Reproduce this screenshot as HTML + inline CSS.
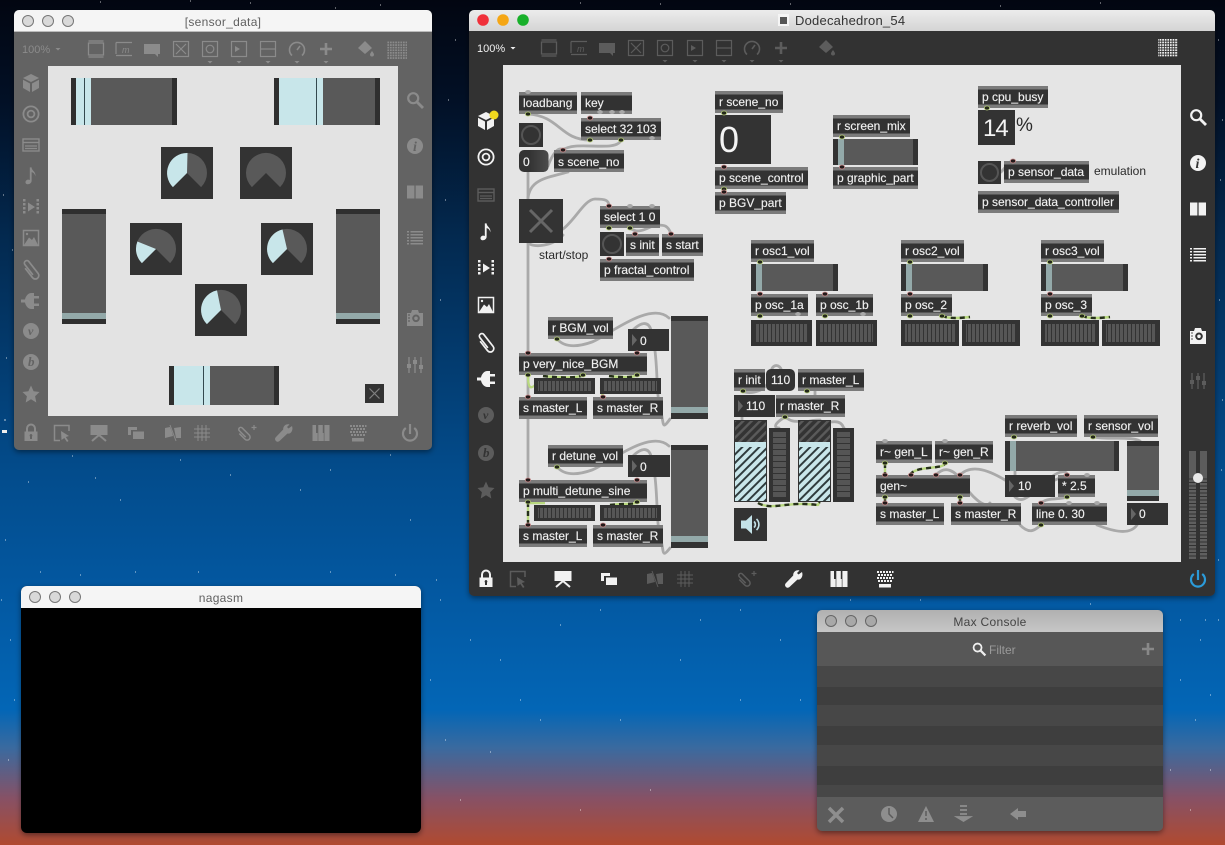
<!DOCTYPE html>
<html><head><meta charset="utf-8"><title>Dodecahedron_54</title>
<style>
html,body{margin:0;padding:0;background:#02101f;overflow:hidden}
svg{display:block}
text{font-family:"Liberation Sans",sans-serif}
.t{font-size:12px;fill:#f0f0f0;stroke:#f0f0f0;stroke-width:.15}
.d{font-size:12px;fill:#2a2a2a}
.w{font-size:12px;fill:#606060;text-anchor:middle;letter-spacing:.3px}
.c{fill:none;stroke:#a9a9a9;stroke-width:2.8;stroke-linecap:round}
.g{fill:none;stroke:#b9d97f;stroke-width:2.4}
.k{fill:none;stroke:#26301a;stroke-width:2.4;stroke-dasharray:5 4}
.s{fill:none;stroke:currentColor}
.gi{color:#8b8b8b}
.wi{color:#f2f2f2}
.di{color:#5c5c5c}
</style></head><body>
<svg xmlns="http://www.w3.org/2000/svg" width="1225" height="845" viewBox="0 0 1225 845">
<defs>
<linearGradient id="bg" x1="0" y1="0" x2="0" y2="1">
<stop offset="0" stop-color="#020611"/><stop offset=".12" stop-color="#021026"/><stop offset=".28" stop-color="#03294f"/><stop offset=".56" stop-color="#034c8c"/><stop offset=".7" stop-color="#0358a1"/><stop offset=".84" stop-color="#0366b6"/><stop offset=".885" stop-color="#3a6a9f"/><stop offset=".945" stop-color="#875165"/><stop offset="1" stop-color="#b04a30"/>
</linearGradient>
<linearGradient id="obj" x1="0" y1="0" x2="0" y2="1"><stop offset="0" stop-color="#7b7b7b"/><stop offset=".17" stop-color="#7b7b7b"/><stop offset=".17" stop-color="#323232"/><stop offset=".85" stop-color="#323232"/><stop offset=".85" stop-color="#7b7b7b"/><stop offset="1" stop-color="#7b7b7b"/></linearGradient>
<linearGradient id="msg" x1="0" y1="0" x2="1" y2="0"><stop offset=".35" stop-color="#333"/><stop offset="1" stop-color="#4c4c4c"/></linearGradient>
<linearGradient id="ttl" x1="0" y1="0" x2="0" y2="1"><stop offset="0" stop-color="#ececec"/><stop offset="1" stop-color="#d4d4d4"/></linearGradient>
<linearGradient id="ttc" x1="0" y1="0" x2="0" y2="1"><stop offset="0" stop-color="#b0b0b0"/><stop offset="1" stop-color="#c6c6c6"/></linearGradient>
<pattern id="mh" width="4" height="10" patternUnits="userSpaceOnUse"><rect width="3" height="10" fill="#565656"/></pattern>
<pattern id="mv" width="10" height="6" patternUnits="userSpaceOnUse"><rect width="10" height="5" fill="#555"/></pattern>
<pattern id="mr" width="10" height="3.5" patternUnits="userSpaceOnUse"><rect width="10" height="2.5" fill="#5f5f5f"/></pattern>
<pattern id="h1" width="6" height="6" patternUnits="userSpaceOnUse" patternTransform="rotate(45)"><rect width="6" height="6" fill="#c9e6ea"/><rect width="2" height="6" fill="#2f3b3d"/></pattern>
<pattern id="h2" width="6" height="6" patternUnits="userSpaceOnUse" patternTransform="rotate(45)"><rect width="6" height="6" fill="#333"/><rect width="2.400" height="6" fill="#5a5a5a"/></pattern>
<pattern id="dg" width="2.600" height="2.600" patternUnits="userSpaceOnUse"><rect width="1.700" height="1.700" fill="#8b8b8b"/></pattern>
<pattern id="dw" width="2.600" height="2.600" patternUnits="userSpaceOnUse"><rect width="1.700" height="1.700" fill="#f2f2f2"/></pattern>
<filter id="sh" x="-10%" y="-10%" width="120%" height="120%"><feDropShadow dx="0" dy="2" stdDeviation="3" flood-color="#000" flood-opacity=".45"/></filter>

<symbol id="cube" overflow="visible"><path fill="currentColor" d="M0-9 8-5 0-1-8-5ZM-8-3.200-1 .5V9L-8 5ZM8-3.200 1 .5V9L8 5Z"/></symbol>
<symbol id="target" overflow="visible"><g class="s" stroke-width="1.800"><circle r="7.600"/><circle r="3.400"/></g></symbol>
<symbol id="rack" overflow="visible"><g class="s" stroke-width="1.400"><rect x="-8" y="-6" width="16" height="12"/><path d="M-8-2.500H8"/><path d="M-6 1H6M-6 3.500H6" stroke-width="1.200"/></g></symbol>
<symbol id="note" overflow="visible"><path fill="currentColor" transform="scale(.78)" d="M-1.500-11H.8C1-6.500 6.800-5.500 5.500.5 5-3 3-4.500.8-5V6C.8 9.500-2.500 11-5 10.500-8 9.800-7.500 6-5 5-3.800 4.500-2.500 4.600-1.500 5.200Z"/></symbol>
<symbol id="player" overflow="visible"><path fill="currentColor" d="M-3-4.500 4 0-3 4.500ZM-8-8h2.500v2.500H-8ZM-8-4h2.500v2.500H-8ZM-8 0h2.500v2.500H-8ZM-8 4h2.500v2.500H-8ZM5.500-8H8v2.500H5.500ZM5.500-4H8v2.500H5.500ZM5.500 0H8v2.500H5.500ZM5.500 4H8v2.500H5.500Z"/></symbol>
<symbol id="image" overflow="visible"><rect class="s" x="-7.500" y="-7.500" width="15" height="15" stroke-width="1.500"/><path fill="currentColor" d="M-7 7-2-.5 1 2 3-1 7 7Z"/><circle cx="-4" cy="-4" r="1.200" fill="currentColor"/></symbol>
<symbol id="clip" overflow="visible"><path class="s" stroke-width="1.700" transform="rotate(-38)" d="M-3.500-5V7A3.500 3.500 0 0 0 3.500 7V-8A2.500 2.500 0 0 0-1.500-8V5"/></symbol>
<symbol id="plug" overflow="visible"><path fill="currentColor" d="M8-5H3V-8H.5C-3.500-8-5.500-4-6-1.500H-10V1.500H-6C-5.500 4-3.500 8 .5 8H3V5H8V2.500H3V-2.500H8Z"/></symbol>
<symbol id="disc" overflow="visible"><circle r="8" fill="currentColor"/></symbol>
<symbol id="star" overflow="visible"><path fill="currentColor" d="M0-8.500 2.600-2.700 8.500-2 4.100 2.200 5.300 8.500 0 5.300-5.300 8.500-4.100 2.200-8.500-2-2.600-2.700Z"/></symbol>
<symbol id="search" overflow="visible"><circle class="s" cx="-1.800" cy="-1.800" r="5" stroke-width="2.200"/><path class="s" stroke-width="2.800" d="M2 2 8 8"/></symbol>
<symbol id="cols" overflow="visible"><path fill="currentColor" d="M-8-6.500H-.6V6.500H-8ZM.6-6.500H8V6.500H.6Z" /></symbol>
<symbol id="list" overflow="visible"><path fill="currentColor" d="M-8-7h2v1.500h-2ZM-4.500-7H8v1.500H-4.500ZM-8-4h2v1.500h-2ZM-4.500-4H8v1.500H-4.500ZM-8-1h2V.5h-2ZM-4.500-1H8V.5H-4.500ZM-8 2h2v1.500h-2ZM-4.500 2H8v1.500H-4.500ZM-8 5h2v1.500h-2ZM-4.500 5H8v1.500H-4.500Z"/></symbol>
<symbol id="camera" overflow="visible"><path fill="currentColor" fill-rule="evenodd" d="M-8-5H-4L-3-8H3L4-5H8V8H-8ZM1-3.500A3.800 3.800 0 1 0 1 4.100 3.800 3.800 0 0 0 1-3.500ZM1-1.500A1.800 1.800 0 1 1 1 2.100 1.800 1.800 0 0 1 1-1.500Z"/><path stroke="#555" d="M-7-3h2M-7 0h2M-7 3h2"/></symbol>
<symbol id="sliders" overflow="visible"><path class="s" stroke-width="1.300" d="M-6-8V8M0-8V8M6-8V8"/><path fill="currentColor" d="M-8-1h4V3h-4ZM-2-5h4v4h-4ZM4 0h4v4H4Z"/></symbol>
<symbol id="lock" overflow="visible"><path class="s" stroke-width="2" d="M-4-1.500V-4.500A4 4 0 0 1 4-4.500V-1.500"/><path fill="currentColor" fill-rule="evenodd" d="M-6.500-1.500H6.500V8H-6.500ZM0 1A1.500 1.500 0 0 0-1 3.500V6H1V3.500A1.500 1.500 0 0 0 0 1Z"/></symbol>
<symbol id="select" overflow="visible"><path class="s" stroke-width="1.500" d="M7-2V-7.500H-7.500V7.500H-2"/><path fill="currentColor" d="M-1-2 7 3 3.800 4 6.500 8 5 9 2.300 5-.5 7Z"/></symbol>
<symbol id="pres" overflow="visible"><path fill="currentColor" d="M-8.500-8H8.500V2H-8.500Z"/><path class="s" stroke-width="2" d="M0 2-7 8M0 2 7 8"/></symbol>
<symbol id="windows" overflow="visible"><path fill="currentColor" d="M-8-6H1V-3H-5V2H-8ZM-3-1.500H8V6H-3Z"/></symbol>
<symbol id="hidden" overflow="visible"><path fill="currentColor" d="M-8-5-3-6-1-1 0 3-8 5ZM1-5 8-6V5L3 5Z"/><path class="s" stroke-width="1" d="M-3-8 3 8"/></symbol>
<symbol id="grid" overflow="visible"><path class="s" d="M-4-8V8M0-8V8M4-8V8M-8-4H8M-8 0H8M-8 4H8"/></symbol>
<symbol id="clipplus" overflow="visible"><path class="s" stroke-width="1.500" transform="rotate(-45 -2 2)" d="M-5-3V5A3 3 0 0 0 1 5V-5A2 2 0 0 0-3-5V4"/><path class="s" stroke-width="1.200" d="M7-8V-3M4.500-5.500H9.500"/></symbol>
<symbol id="wrench" overflow="visible"><path fill="currentColor" d="M8-7 4.500-4.500 3-6 5.500-8.500C2-9.500-1-7-.8-3.500L-8 4C-9 5-9.500 6.500-8 8-6.500 9.500-5 8.500-4 7.500L3.500 0.500C7 1.500 9.500-3 8-7Z"/></symbol>
<symbol id="piano" overflow="visible"><path fill="currentColor" d="M-8.500-8H-5V0H-3.300V8H-8.500ZM-2.700-8H1.800V0H2.800V8H-2.700ZM3.400-8H8.500V8H3.400Z"/></symbol>
<symbol id="keys" overflow="visible"><path fill="currentColor" d="M-8-8h2v2h-2ZM-5-8h2v2h-2ZM-2-8h2v2h-2ZM1-8h2v2H1ZM4-8h2v2H4ZM7-8h1.500v2H7ZM-7-5h2v2h-2ZM-4-5h2v2h-2ZM-1-5h2v2h-2ZM2-5h2v2H2ZM5-5h2v2H5ZM-8-2h2v2h-2ZM-5-2h2v2h-2ZM-2-2h2v2h-2ZM1-2h2v2H1ZM4-2h2v2H4ZM7-2h1.500v2H7ZM-7 1h2v2h-2ZM-4 1h2v2h-2ZM-1 1h2v2h-2ZM2 1h2v2H2ZM5 1h2v2H5ZM-6 5H6V8.500H-6Z"/></symbol>
<symbol id="power" overflow="visible"><path class="s" stroke-width="2.200" d="M-4.200-5A7 7 0 1 0 4.200-5M0-9V1"/></symbol>
<symbol id="frame" overflow="visible"><path class="s" stroke-width="1.300" d="M-7.500-8H7.500M-7.500 8H7.500M-7.500-6.500V6.500M7.500-6.500V6.500M-7.500-6H7.500M-7.500 6H7.500"/></symbol>
<symbol id="msgi" overflow="visible"><path class="s" stroke-width="1.200" d="M-8-6.500H8M-8-6.500V5M-8 6.500H8"/></symbol>
<symbol id="comment" overflow="visible"><path fill="currentColor" d="M-8-5H8V5H6V8L3 5H-8Z"/></symbol>
<symbol id="xbox" overflow="visible"><rect class="s" x="-7.500" y="-7.500" width="15" height="15" stroke-width="1.200"/><path class="s" stroke-width="1.200" d="M-5-5 5 5M5-5-5 5"/></symbol>
<symbol id="btn" overflow="visible"><rect class="s" x="-7.500" y="-7.500" width="15" height="15" stroke-width="1.200"/><circle class="s" r="3.800" stroke-width="1.200"/></symbol>
<symbol id="playb" overflow="visible"><rect class="s" x="-7.500" y="-7.500" width="15" height="15" stroke-width="1.200"/><path fill="currentColor" d="M-4-3 1 0-4 3Z"/></symbol>
<symbol id="minus" overflow="visible"><rect class="s" x="-7.500" y="-7.500" width="15" height="15" stroke-width="1.200"/><path class="s" stroke-width="1.200" d="M-7.500 0H7.500"/></symbol>
<symbol id="dial" overflow="visible"><path class="s" stroke-width="1.600" d="M-5 5.500A7.500 7.500 0 1 1 5 5.500M0 0 3-4"/></symbol>
<symbol id="plus" overflow="visible"><path fill="currentColor" d="M-1.300-6H1.300V-1.300H6V1.300H1.300V6H-1.300V1.300H-6V-1.300H-1.300Z"/></symbol>
<symbol id="bucket" overflow="visible"><path fill="currentColor" d="M-1-8 6-1-1 5-8-1ZM6 2C6 2 4 4.500 4 5.500A2 2 0 0 0 8 5.500C8 4.500 6 2 6 2Z"/></symbol>
<symbol id="tri" overflow="visible"><path fill="currentColor" d="M-2.500 0H2.500L0 2.500Z"/></symbol>
<symbol id="in" overflow="visible"><ellipse rx="2.600" ry="2" fill="#241a1a" stroke="#c98c8c" stroke-width=".8"/></symbol>
<symbol id="out" overflow="visible"><ellipse rx="2.600" ry="2" fill="#23281a" stroke="#b6cc78" stroke-width=".8"/></symbol>
<symbol id="idle" overflow="visible"><ellipse rx="2.800" ry="2" fill="#a9a9a9"/></symbol>
</defs>

<rect width="1225" height="845" fill="url(#bg)"/>
<path stroke="#fff" stroke-width="1" opacity=".75" fill="none" d="M3 195h1M6 358h1M12 250h1M4 420h2M5 540h1M1 600h1M28 482h1M72 456h1M95 478h1M120 500h1M180 460h1M230 475h1M300 490h1M330 470h1M390 455h1M410 520h1M440 300h1M445 200h1M448 100h1M455 40h1M250 3h1M380 5h1M190 1h1M100 2h1M335 8h1M580 3h1M790 4h1M660 4h1M1000 6h1M1100 3h1M1218 40h1M1222 120h1M1220 180h1M1219 300h1M1222 400h1M1221 470h1M1218 560h1M1205 620h1M1180 680h1M1195 720h1M1210 770h1M470 640h1M500 660h1M520 700h1M540 720h1M490 752h1M620 720h1M680 660h1M740 700h1M600 610h1M560 625h1M700 620h1M740 610h1M780 640h1M800 700h1M460 800h1M650 790h1M580 810h1M440 600h1M430 680h1M445 740h1M1180 620h1M1200 640h1M1210 695h1M10 640h1M14 700h1M8 760h1M40 572h1M80 575h1M135 572h1M198 572h1M330 572h1M395 575h1M436 580h1M1218 620h1M1170 770h1M1190 810h1M920 600h1M850 600h1M1090 604h1"/>
<rect x="2" y="430" width="5" height="3" fill="#eee"/>

<!-- WINDOW: sensor_data -->
<g filter="url(#sh)"><rect x="14" y="10" width="418" height="440" rx="5" fill="#636363"/></g>
<path d="M14 32V15a5 5 0 0 1 5-5H427a5 5 0 0 1 5 5V32Z" fill="#f5f5f5"/>
<rect x="14" y="31" width="418" height="1" fill="#bbb"/>
<g fill="#d9d9d9" stroke="#777"><circle cx="28" cy="21" r="5.500"/><circle cx="48" cy="21" r="5.500"/><circle cx="68" cy="21" r="5.500"/></g>
<text x="223" y="26" class="w">[sensor_data]</text>
<rect x="48" y="66" width="350" height="350" fill="#e3e3e3"/>
<g class="gi">
<text x="22" y="53" style="font-size:11px;fill:#8b8b8b">100%</text><use href="#tri" x="58" y="48"/>
<use href="#frame" x="96" y="49"/><use href="#msgi" x="124" y="49"/><text x="122" y="53" style="font-size:9px;font-style:italic;fill:#8b8b8b">m</text><use href="#comment" x="152" y="49"/><use href="#xbox" x="181" y="49"/><use href="#btn" x="210" y="49"/><use href="#playb" x="239" y="49"/><use href="#minus" x="268" y="49"/><use href="#dial" x="297" y="50"/><use href="#plus" x="326" y="49"/><use href="#bucket" x="366" y="49"/>
<path d="M390 41.500h1.700M387 41h20v18h-20Z" fill="url(#dg)"/>
<use href="#tri" x="210" y="61"/><use href="#tri" x="239" y="61"/><use href="#tri" x="268" y="61"/><use href="#tri" x="297" y="61"/><use href="#tri" x="326" y="61"/>
<use href="#cube" x="31" y="83"/><use href="#target" x="31" y="114"/><use href="#rack" x="31" y="145"/><use href="#note" x="31" y="176"/><use href="#player" x="31" y="207"/><use href="#image" x="31" y="238"/><use href="#clip" x="31" y="270"/><use href="#plug" x="31" y="301"/><use href="#disc" x="31" y="331"/><use href="#disc" x="31" y="362"/><use href="#star" x="31" y="394"/>
<use href="#search" x="415" y="100"/><use href="#disc" x="415" y="146"/><use href="#cols" x="415" y="192"/><use href="#list" x="415" y="238"/><use href="#camera" x="415" y="318"/><use href="#sliders" x="415" y="365"/>
<use href="#lock" x="31" y="433"/><use href="#select" x="62" y="433"/><use href="#pres" x="99" y="433"/><use href="#windows" x="136" y="433"/><use href="#hidden" x="173" y="433"/><use href="#grid" x="202" y="433"/><use href="#clipplus" x="247" y="433"/><use href="#wrench" x="284" y="433"/><use href="#piano" x="321" y="433"/><use href="#keys" x="358" y="433"/><use href="#power" x="410" y="433"/>
</g>
<text x="28" y="335" style="font-size:12px;font-style:italic;font-family:'Liberation Serif',serif;fill:#636363;font-weight:700">v</text>
<text x="28" y="366" style="font-size:13px;font-style:italic;font-family:'Liberation Serif',serif;fill:#636363;font-weight:700">b</text>
<text x="413" y="151" style="font-size:14px;font-style:italic;font-family:'Liberation Serif',serif;fill:#636363;font-weight:700">i</text>
<!-- sliders -->
<rect x="71" y="78" width="106" height="47" fill="#595959"/><rect x="71" y="78" width="5" height="47" fill="#2f2f2f"/><rect x="172" y="78" width="5" height="47" fill="#2f2f2f"/><rect x="76" y="78" width="15" height="47" fill="#c8e6ea"/><rect x="84" y="78" width="1" height="47" fill="#34494f"/>
<rect x="274" y="78" width="106" height="47" fill="#595959"/><rect x="274" y="78" width="5" height="47" fill="#2f2f2f"/><rect x="375" y="78" width="5" height="47" fill="#2f2f2f"/><rect x="279" y="78" width="44" height="47" fill="#c8e6ea"/><rect x="316" y="78" width="1" height="47" fill="#34494f"/>
<rect x="169" y="366" width="110" height="39" fill="#595959"/><rect x="169" y="366" width="5" height="39" fill="#2f2f2f"/><rect x="274" y="366" width="5" height="39" fill="#2f2f2f"/><rect x="174" y="366" width="36" height="39" fill="#c8e6ea"/><rect x="203" y="366" width="1" height="39" fill="#34494f"/>
<rect x="62" y="209" width="44" height="115" fill="#595959"/><rect x="62" y="209" width="44" height="5" fill="#2f2f2f"/><rect x="62" y="313" width="44" height="6" fill="#93a9a9"/><rect x="62" y="319" width="44" height="5" fill="#2f2f2f"/>
<rect x="336" y="209" width="44" height="115" fill="#595959"/><rect x="336" y="209" width="44" height="5" fill="#2f2f2f"/><rect x="336" y="313" width="44" height="6" fill="#93a9a9"/><rect x="336" y="319" width="44" height="5" fill="#2f2f2f"/>
<!-- dials -->
<g><rect x="161" y="147" width="52" height="52" fill="#333"/><path d="M187 173 201.100 187.100A20 20 0 1 0 172.900 187.100Z" fill="#595959"/><path d="M187 173 172.900 187.100A20 20 0 0 1 187.500 153Z" fill="#c8e6ea"/></g>
<g><rect x="240" y="147" width="52" height="52" fill="#333"/><path d="M266 173 280.100 187.100A20 20 0 1 0 251.900 187.100Z" fill="#595959"/></g>
<g><rect x="130" y="223" width="52" height="52" fill="#333"/><path d="M156 249 170.100 263.100A20 20 0 1 0 141.900 263.100Z" fill="#595959"/><path d="M156 249 141.900 263.100A20 20 0 0 1 137.400 241.500Z" fill="#c8e6ea"/></g>
<g><rect x="261" y="223" width="52" height="52" fill="#333"/><path d="M287 249 301.100 263.100A20 20 0 1 0 272.900 263.100Z" fill="#595959"/><path d="M287 249 272.900 263.100A20 20 0 0 1 282.500 229.500Z" fill="#c8e6ea"/></g>
<g><rect x="195" y="284" width="52" height="52" fill="#333"/><path d="M221 310 235.100 324.100A20 20 0 1 0 206.900 324.100Z" fill="#595959"/><path d="M221 310 206.900 324.100A20 20 0 0 1 217 290.400Z" fill="#c8e6ea"/></g>
<rect x="365" y="384" width="19" height="19" fill="#333"/><path d="M369.500 388.500 379.500 398.500M379.500 388.500 369.500 398.500" stroke="#808080" stroke-width="1.200"/>

<!-- WINDOW: main -->
<g filter="url(#sh)"><rect x="469" y="10" width="746" height="586" rx="5" fill="#333"/></g>
<path d="M469 31V15a5 5 0 0 1 5-5H1210a5 5 0 0 1 5 5V31Z" fill="url(#ttl)"/>
<circle cx="483" cy="20" r="5.800" fill="#f0303a"/><circle cx="503" cy="20" r="5.800" fill="#f5a614"/><circle cx="523" cy="20" r="5.800" fill="#18b02a"/>
<rect x="778" y="14" width="11" height="12" fill="#f5f5f5"/><rect x="780" y="17" width="7" height="7" fill="#555"/>
<text x="795" y="25" style="font-size:13px;fill:#333;letter-spacing:.22px">Dodecahedron_54</text>
<rect x="503" y="65" width="678" height="497" fill="#e5e5e5"/>
<text x="477" y="52" style="font-size:11px;fill:#f0f0f0">100%</text><use href="#tri" x="513" y="47" color="#f0f0f0"/>
<g class="di">
<use href="#frame" x="549" y="48"/><use href="#msgi" x="579" y="48"/><text x="577" y="52" style="font-size:9px;font-style:italic;fill:#5c5c5c">m</text><use href="#comment" x="607" y="48"/><use href="#xbox" x="636" y="48"/><use href="#btn" x="665" y="48"/><use href="#playb" x="695" y="48"/><use href="#minus" x="724" y="48"/><use href="#dial" x="752" y="49"/><use href="#plus" x="781" y="48"/><use href="#bucket" x="827" y="48"/>
<use href="#tri" x="665" y="60"/><use href="#tri" x="695" y="60"/><use href="#tri" x="724" y="60"/><use href="#tri" x="752" y="60"/><use href="#tri" x="781" y="60"/>
<use href="#rack" x="486" y="195"/><use href="#disc" x="486" y="415"/><use href="#disc" x="486" y="453"/><use href="#star" x="486" y="490"/>
<use href="#sliders" x="1198" y="381"/>
<use href="#select" x="518" y="579"/><use href="#hidden" x="655" y="579"/><use href="#grid" x="685" y="579"/><use href="#clipplus" x="747" y="579"/>
</g>
<text x="483" y="419" style="font-size:12px;font-style:italic;font-family:'Liberation Serif',serif;fill:#333;font-weight:700">v</text>
<text x="483" y="457" style="font-size:13px;font-style:italic;font-family:'Liberation Serif',serif;fill:#333;font-weight:700">b</text>
<g class="wi">
<rect x="1158" y="39" width="20" height="18" fill="url(#dw)"/>
<use href="#cube" x="486" y="121"/><use href="#target" x="486" y="157"/><use href="#note" x="486" y="232"/><use href="#player" x="486" y="268"/><use href="#image" x="486" y="305"/><use href="#clip" x="486" y="343"/><use href="#plug" x="487" y="379"/>
<use href="#search" x="1198" y="117"/><use href="#disc" x="1198" y="163"/><use href="#cols" x="1198" y="209"/><use href="#list" x="1198" y="255"/><use href="#camera" x="1198" y="336"/>
<use href="#lock" x="486" y="579"/><use href="#pres" x="563" y="579"/><use href="#windows" x="609" y="579"/><use href="#wrench" x="794" y="579"/><use href="#piano" x="839" y="579"/><use href="#keys" x="885" y="579"/>
</g>
<circle cx="494" cy="115" r="4.500" fill="#f0d81e"/>
<text x="1195.500" y="168" style="font-size:14px;font-style:italic;font-family:'Liberation Serif',serif;fill:#333;font-weight:700">i</text>
<use href="#power" x="1198" y="579" color="#2b9bd9"/>
<!-- master gain -->
<rect x="1189" y="451" width="7" height="27" fill="#5c5c5c"/><rect x="1200" y="451" width="7" height="27" fill="#5c5c5c"/>
<rect x="1189" y="478" width="7" height="81" fill="url(#mr)"/><rect x="1200" y="478" width="7" height="81" fill="url(#mr)"/>
<circle cx="1198" cy="478" r="5" fill="#e8e8e8"/>

<!-- cables -->
<g>
<path class="c" d="M528 172V480"/>
<path class="c" d="M568 172C545 178 530 180 528 198"/>
<path class="c" d="M528 114C560 116 560 140 590 140"/>
<path class="c" d="M621 140C617 153 575 140 563 150"/>
<path class="c" d="M548 166C552 155 558 146 563 150"/>
<path class="c" d="M563 229C575 220 585 199 595 199S609 200 609 206"/>
<path class="c" d="M528 243C535 248 553 246 563 235"/>
<path class="c" d="M630 228C640 236 650 225 657 225S668 225 671 234"/>
<path class="c" d="M557 339C565 348 578 347 592 342S650 300 669 318"/>
<path class="c" d="M633 330C640 323 648 320 651 330"/>
<path class="c" d="M670 419C662 430 664 425 661 412C656 395 658 375 655 351"/>
<path class="c" d="M557 467C565 476 578 475 592 470S650 428 669 446"/>
<path class="c" d="M633 456C640 449 648 446 651 456"/>
<path class="c" d="M670 548C662 558 664 553 661 540C656 523 658 503 655 477"/>
<path class="c" d="M742 391C750 395 768 392 771 375C770 364 780 362 782 372"/>
<path class="c" d="M742 417V420"/>
<path class="c" d="M785 417C772 425 775 428 779 428M785 417C795 424 795 420 807 422C812 420 818 420 820 420M831 422C843 420 843 428 844 428"/>
<path class="c" d="M815 391V395"/>
<path class="c" d="M936 475C945 465 955 470 963 483C970 495 985 510 990 503"/>
<path class="c" d="M960 475C970 465 985 468 1005 480"/>
<path class="c" d="M1015 471V475"/>
<path class="c" d="M1015 497C1025 506 1030 490 1064 476"/>
<path class="c" d="M1067 497C1060 500 1048 497 1041 503"/>
<path class="c" d="M1020 525C1030 535 1035 530 1041 525"/>
<path class="c" d="M1097 525C1115 532 1130 535 1137 525"/>
<path class="c" d="M1093 437C1110 440 1130 436 1140 441"/>
<path class="c" d="M1050 478C1060 470 1068 470 1067 476"/>
<path class="c" d="M1001 172C1008 165 1010 160 1014 161"/>
</g>
<g id="sig">
<path class="g" d="M528 375C528 390 531 390 538 382"/>
<path class="g" d="M543 376 C560 378 580 378 583 375"/>
<path class="g" d="M609 376C625 378 635 377 637 375"/>
<path class="g" d="M528 502V525"/><path class="k" d="M528 502V525"/>
<path class="g" d="M528 503H545"/>
<path class="g" d="M610 505C625 503 635 505 637 502"/><path class="k" d="M610 505C625 503 635 505 637 502"/>
<path class="k" d="M543 376C560 378 580 378 583 375"/><path class="k" d="M609 376C625 378 635 377 637 375"/>
<path class="g" d="M603 396C600 390 601 384 603 380"/>
<path class="g" d="M942 316C950 319 960 318 970 317"/><path class="k" d="M942 316C950 319 960 318 970 317"/>
<path class="g" d="M1082 316C1090 319 1100 318 1110 317"/><path class="k" d="M1082 316C1090 319 1100 318 1110 317"/>
<path class="g" d="M758 503C770 510 785 503 805 504S815 506 820 502"/><path class="k" d="M758 503C770 510 785 503 805 504S815 506 820 502"/>
<path class="g" d="M885 463V475"/><path class="k" d="M885 463V475"/>
<path class="g" d="M910 475C915 465 945 470 945 463"/><path class="k" d="M910 475C915 465 945 470 945 463"/>
<path class="g" d="M885 497V503"/><path class="g" d="M960 497V503"/><path class="k" d="M885 497V503M960 497V503"/>
</g>

<!-- objects -->
<g fill="url(#obj)">
<rect x="519" y="92" width="58" height="22"/><rect x="581" y="92" width="51" height="22"/><rect x="581" y="118" width="80" height="22"/><rect x="554" y="150" width="70" height="22"/><rect x="600" y="206" width="60" height="22"/><rect x="626" y="234" width="33" height="22"/><rect x="662" y="234" width="41" height="22"/><rect x="600" y="259" width="94" height="22"/>
<rect x="715" y="91" width="68" height="22"/><rect x="715" y="167" width="93" height="22"/><rect x="715" y="192" width="71" height="22"/><rect x="833" y="115" width="77" height="22"/><rect x="833" y="167" width="85" height="22"/>
<rect x="978" y="86" width="70" height="22"/><rect x="1004" y="161" width="85" height="22"/><rect x="978" y="191" width="141" height="22"/>
<rect x="751" y="240" width="63" height="22"/><rect x="901" y="240" width="63" height="22"/><rect x="1041" y="240" width="63" height="22"/>
<rect x="751" y="294" width="57" height="22"/><rect x="816" y="294" width="57" height="22"/><rect x="901" y="294" width="51" height="22"/><rect x="1041" y="294" width="51" height="22"/>
<rect x="548" y="317" width="65" height="22"/><rect x="519" y="353" width="128" height="22"/><rect x="519" y="397" width="68" height="22"/><rect x="593" y="397" width="70" height="22"/>
<rect x="548" y="445" width="75" height="22"/><rect x="519" y="480" width="128" height="22"/><rect x="519" y="525" width="68" height="22"/><rect x="593" y="525" width="70" height="22"/>
<rect x="734" y="369" width="31" height="22"/><rect x="798" y="369" width="66" height="22"/><rect x="776" y="395" width="69" height="22"/>
<rect x="876" y="441" width="56" height="22"/><rect x="935" y="441" width="58" height="22"/><rect x="876" y="475" width="94" height="22"/><rect x="876" y="503" width="68" height="22"/><rect x="951" y="503" width="70" height="22"/>
<rect x="1005" y="415" width="72" height="22"/><rect x="1084" y="415" width="74" height="22"/><rect x="1058" y="475" width="37" height="22"/><rect x="1032" y="503" width="75" height="22"/>
</g>
<g fill="#333">
<rect x="519" y="123" width="24" height="24"/><rect x="600" y="232" width="24" height="24"/><rect x="978" y="161" width="23" height="23"/>
<rect x="519" y="199" width="44" height="44"/>
<rect x="715" y="115" width="56" height="49"/><rect x="978" y="110" width="37" height="35"/>
<rect x="628" y="329" width="41" height="22"/><rect x="628" y="455" width="42" height="22"/><rect x="734" y="395" width="41" height="22"/><rect x="1005" y="475" width="50" height="22"/><rect x="1127" y="503" width="41" height="22"/>
<rect x="734" y="508" width="33" height="33"/>
</g>
<rect x="519" y="150" width="29.500" height="22" rx="5" fill="url(#msg)"/>
<rect x="766" y="369" width="29" height="22" rx="5" fill="#333"/>
<g fill="none" stroke="#555" stroke-width="2"><circle cx="531" cy="135" r="9"/><circle cx="612" cy="244" r="9"/><circle cx="989.500" cy="172.500" r="8.500"/></g>
<path d="M530 210 552 232M552 210 530 232" stroke="#666" stroke-width="3"/>
<g fill="#666"><path d="M632 334 637 340 632 346Z"/><path d="M632 460 637 466 632 472Z"/><path d="M738 400 743 406 738 412Z"/><path d="M1009 480 1014 486 1009 492Z"/><path d="M1131 508 1136 514 1131 520Z"/></g>
<!-- h sliders -->
<g>
<rect x="833" y="139" width="85" height="26" fill="#595959"/><rect x="833" y="139" width="5" height="26" fill="#333"/><rect x="913" y="139" width="5" height="26" fill="#333"/><rect x="838" y="139" width="6" height="26" fill="#93a9a9"/>
<rect x="751" y="264" width="87" height="27" fill="#595959"/><rect x="751" y="264" width="5" height="27" fill="#333"/><rect x="833" y="264" width="5" height="27" fill="#333"/><rect x="756" y="264" width="6" height="27" fill="#93a9a9"/>
<rect x="901" y="264" width="87" height="27" fill="#595959"/><rect x="901" y="264" width="5" height="27" fill="#333"/><rect x="983" y="264" width="5" height="27" fill="#333"/><rect x="906" y="264" width="6" height="27" fill="#93a9a9"/>
<rect x="1041" y="264" width="87" height="27" fill="#595959"/><rect x="1041" y="264" width="5" height="27" fill="#333"/><rect x="1123" y="264" width="5" height="27" fill="#333"/><rect x="1046" y="264" width="6" height="27" fill="#93a9a9"/>
<rect x="1005" y="441" width="114" height="30" fill="#595959"/><rect x="1005" y="441" width="5" height="30" fill="#333"/><rect x="1114" y="441" width="5" height="30" fill="#333"/><rect x="1010" y="441" width="6" height="30" fill="#93a9a9"/>
</g>
<!-- v sliders -->
<g>
<rect x="671" y="316" width="37" height="103" fill="#595959"/><rect x="671" y="316" width="37" height="5" fill="#333"/><rect x="671" y="407" width="37" height="6" fill="#93a9a9"/><rect x="671" y="413" width="37" height="6" fill="#333"/>
<rect x="671" y="445" width="37" height="103" fill="#595959"/><rect x="671" y="445" width="37" height="5" fill="#333"/><rect x="671" y="536" width="37" height="6" fill="#93a9a9"/><rect x="671" y="542" width="37" height="6" fill="#333"/>
<rect x="1127" y="441" width="32" height="60" fill="#595959"/><rect x="1127" y="441" width="32" height="5" fill="#333"/><rect x="1127" y="490" width="32" height="6" fill="#93a9a9"/><rect x="1127" y="496" width="32" height="5" fill="#333"/>
</g>
<!-- h meters -->
<g fill="#333">
<rect x="751" y="320" width="61" height="26"/><rect x="816" y="320" width="61" height="26"/><rect x="901" y="320" width="58" height="26"/><rect x="962" y="320" width="58" height="26"/><rect x="1041" y="320" width="58" height="26"/><rect x="1102" y="320" width="58" height="26"/>
<rect x="534" y="378" width="61" height="16"/><rect x="600" y="378" width="61" height="16"/><rect x="534" y="505" width="61" height="16"/><rect x="600" y="505" width="61" height="16"/>
<rect x="769" y="428" width="21" height="74"/><rect x="833" y="428" width="21" height="74"/>
</g>
<g fill="url(#mh)">
<rect x="755" y="324" width="53" height="18"/><rect x="820" y="324" width="53" height="18"/><rect x="905" y="324" width="50" height="18"/><rect x="966" y="324" width="50" height="18"/><rect x="1045" y="324" width="50" height="18"/><rect x="1106" y="324" width="50" height="18"/>
<rect x="538" y="381" width="53" height="10"/><rect x="604" y="381" width="53" height="10"/><rect x="538" y="508" width="53" height="10"/><rect x="604" y="508" width="53" height="10"/>
</g>
<g fill="url(#mv)"><rect x="773" y="432" width="13" height="66"/><rect x="837" y="432" width="13" height="66"/></g>
<!-- gains -->
<g>
<rect x="734" y="420" width="33" height="22" fill="url(#h2)"/><rect x="734" y="442" width="33" height="5" fill="#c8e6ea"/><rect x="734" y="447" width="33" height="55" fill="url(#h1)"/><rect x="734.500" y="420.500" width="32" height="81" fill="none" stroke="#333"/>
<rect x="798" y="420" width="33" height="22" fill="url(#h2)"/><rect x="798" y="442" width="33" height="5" fill="#c8e6ea"/><rect x="798" y="447" width="33" height="55" fill="url(#h1)"/><rect x="798.500" y="420.500" width="32" height="81" fill="none" stroke="#333"/>
</g>
<path fill="#c4e2e8" d="M741 520.500H746L752 515V534L746 528.500H741Z"/>
<path fill="none" stroke="#c4e2e8" stroke-width="1.600" d="M754 521.500A4 4 0 0 1 754 527.500M756.500 519A7.500 7.500 0 0 1 756.500 530"/>
<!-- idle ports -->
<g>
<use href="#idle" x="528" y="92"/><use href="#idle" x="600" y="112"/><use href="#idle" x="612" y="112"/><use href="#idle" x="622" y="112"/><use href="#idle" x="652" y="138"/><use href="#idle" x="630" y="206"/><use href="#idle" x="652" y="206"/><use href="#idle" x="798" y="314"/><use href="#idle" x="863" y="314"/><use href="#idle" x="885" y="441"/><use href="#idle" x="945" y="441"/><use href="#idle" x="1087" y="475"/><use href="#idle" x="1069" y="503"/><use href="#idle" x="1097" y="503"/>
</g>
<!-- ports -->
<g>
<use href="#out" x="528" y="114"/><use href="#in" x="590" y="118"/><use href="#out" x="590" y="140"/><use href="#out" x="621" y="140"/><use href="#in" x="563" y="150"/><use href="#in" x="609" y="206"/><use href="#out" x="609" y="228"/><use href="#out" x="630" y="228"/><use href="#in" x="635" y="234"/><use href="#in" x="671" y="234"/><use href="#in" x="609" y="259"/>
<use href="#out" x="724" y="113"/><use href="#in" x="724" y="167"/><use href="#out" x="724" y="189"/><use href="#in" x="724" y="192"/><use href="#out" x="842" y="137"/><use href="#in" x="842" y="167"/>
<use href="#out" x="987" y="108"/><use href="#in" x="1013" y="161"/>
<use href="#out" x="760" y="262"/><use href="#out" x="910" y="262"/><use href="#out" x="1050" y="262"/><use href="#in" x="760" y="294"/><use href="#in" x="825" y="294"/><use href="#in" x="910" y="294"/><use href="#in" x="1050" y="294"/><use href="#out" x="760" y="316"/><use href="#out" x="825" y="316"/><use href="#out" x="910" y="316"/><use href="#out" x="942" y="316"/><use href="#out" x="1050" y="316"/><use href="#out" x="1082" y="316"/>
<use href="#out" x="557" y="339"/><use href="#in" x="528" y="353"/><use href="#in" x="637" y="353"/><use href="#out" x="528" y="375"/><use href="#out" x="583" y="375"/><use href="#out" x="637" y="375"/><use href="#in" x="528" y="397"/><use href="#in" x="603" y="397"/>
<use href="#out" x="557" y="467"/><use href="#in" x="528" y="480"/><use href="#in" x="637" y="480"/><use href="#out" x="528" y="502"/><use href="#out" x="637" y="502"/><use href="#in" x="528" y="525"/><use href="#in" x="603" y="525"/>
<use href="#out" x="743" y="391"/><use href="#out" x="807" y="391"/><use href="#out" x="785" y="417"/>
<use href="#out" x="885" y="463"/><use href="#out" x="945" y="463"/><use href="#in" x="885" y="475"/><use href="#in" x="911" y="475"/><use href="#in" x="936" y="475"/><use href="#in" x="960" y="475"/><use href="#out" x="885" y="497"/><use href="#out" x="960" y="497"/><use href="#in" x="885" y="503"/><use href="#in" x="960" y="503"/>
<use href="#out" x="1014" y="437"/><use href="#out" x="1093" y="437"/><use href="#in" x="1067" y="475"/><use href="#out" x="1067" y="497"/><use href="#in" x="1041" y="503"/><use href="#out" x="1041" y="525"/>
</g>
<!-- text -->
<g class="t">
<text x="523" y="107">loadbang</text><text x="585" y="107">key</text><text x="585" y="133">select 32 103</text><text x="523" y="166">0</text><text x="558" y="166">s scene_no</text>
<text x="604" y="221">select 1 0</text><text x="630" y="249">s init</text><text x="666" y="249">s start</text><text x="604" y="274">p fractal_control</text>
<text x="719" y="106">r scene_no</text><text x="719" y="182">p scene_control</text><text x="719" y="207">p BGV_part</text>
<text x="837" y="130">r screen_mix</text><text x="837" y="182">p graphic_part</text>
<text x="982" y="101">p cpu_busy</text><text x="1008" y="176">p sensor_data</text><text x="982" y="206">p sensor_data_controller</text>
<text x="755" y="255">r osc1_vol</text><text x="905" y="255">r osc2_vol</text><text x="1045" y="255">r osc3_vol</text>
<text x="755" y="309">p osc_1a</text><text x="820" y="309">p osc_1b</text><text x="905" y="309">p osc_2</text><text x="1045" y="309">p osc_3</text>
<text x="552" y="332">r BGM_vol</text><text x="640" y="345">0</text><text x="523" y="368">p very_nice_BGM</text><text x="523" y="412">s master_L</text><text x="597" y="412">s master_R</text>
<text x="552" y="460">r detune_vol</text><text x="640" y="471">0</text><text x="523" y="495">p multi_detune_sine</text><text x="523" y="540">s master_L</text><text x="597" y="540">s master_R</text>
<text x="738" y="384">r init</text><text x="771" y="384">110</text><text x="802" y="384">r master_L</text><text x="746" y="410">110</text><text x="780" y="410">r master_R</text>
<text x="880" y="456">r~ gen_L</text><text x="939" y="456">r~ gen_R</text><text x="880" y="490">gen~</text><text x="880" y="518">s master_L</text><text x="955" y="518">s master_R</text>
<text x="1009" y="430">r reverb_vol</text><text x="1088" y="430">r sensor_vol</text><text x="1018" y="490">10</text><text x="1062" y="490">* 2.5</text><text x="1036" y="518">line 0. 30</text><text x="1139" y="518">0</text>
</g>
<text x="719" y="152" style="font-size:36px;fill:#f4f4f4">0</text>
<text x="983" y="136" style="font-size:24px;fill:#f4f4f4;letter-spacing:-1px">14</text>
<text x="1016" y="131" style="font-size:19px;fill:#2a2a2a">%</text>
<text x="539" y="259" class="d">start/stop</text>
<text x="1094" y="175" class="d">emulation</text>

<!-- WINDOW: nagasm -->
<g filter="url(#sh)"><rect x="21" y="586" width="400" height="247" rx="6" fill="#000"/></g>
<path d="M21 608V592a6 6 0 0 1 6-6H415a6 6 0 0 1 6 6V608Z" fill="#f5f5f5"/>
<g fill="#d9d9d9" stroke="#777"><circle cx="35" cy="597" r="5.500"/><circle cx="55" cy="597" r="5.500"/><circle cx="75" cy="597" r="5.500"/></g>
<text x="221" y="602" class="w">nagasm</text>

<!-- WINDOW: console -->
<g filter="url(#sh)"><rect x="817" y="610" width="346" height="221" rx="5" fill="#5b5b5b"/></g>
<path d="M817 632V615a5 5 0 0 1 5-5H1158a5 5 0 0 1 5 5V632Z" fill="url(#ttc)"/>
<g fill="#a8a8a8" stroke="#666"><circle cx="831" cy="621" r="5.500"/><circle cx="851" cy="621" r="5.500"/><circle cx="871" cy="621" r="5.500"/></g>
<text x="990" y="626" class="w" style="fill:#444">Max Console</text>
<rect x="817" y="632" width="346" height="34" fill="#575757"/>
<rect x="817" y="666" width="346" height="21" fill="#474747"/><rect x="817" y="687" width="346" height="18" fill="#3e3e3e"/><rect x="817" y="705" width="346" height="21" fill="#474747"/><rect x="817" y="726" width="346" height="19" fill="#3e3e3e"/><rect x="817" y="745" width="346" height="21" fill="#474747"/><rect x="817" y="766" width="346" height="19" fill="#3e3e3e"/><rect x="817" y="785" width="346" height="12" fill="#474747"/>
<use href="#search" x="979" y="649" color="#eee" transform="translate(195.800 129.800) scale(.8)"/>
<text x="989" y="654" style="font-size:12px;fill:#9a9a9a">Filter</text>
<use href="#plus" x="1148" y="649" color="#888"/>
<g color="#8e8e8e">
<path d="M829 808 843 822M843 808 829 822" stroke="#8e8e8e" stroke-width="3.500"/>
<circle cx="889" cy="814" r="8" fill="#8e8e8e"/><path d="M889 808V814L893 818" stroke="#5b5b5b" stroke-width="1.500" fill="none"/>
<path d="M926 806 934 822H918Z" fill="#8e8e8e"/><path d="M926 811V816M926 818V820" stroke="#5b5b5b" stroke-width="1.500"/>
<path d="M960 806H967M960 810H967M960 814H967M957 817H970L963.500 821Z" stroke="#8e8e8e" stroke-width="1.800" fill="#8e8e8e"/>
<path d="M1010 814 1018 808V811H1026V817H1018V820Z" fill="#8e8e8e"/>
</g>
</svg>
</body></html>
